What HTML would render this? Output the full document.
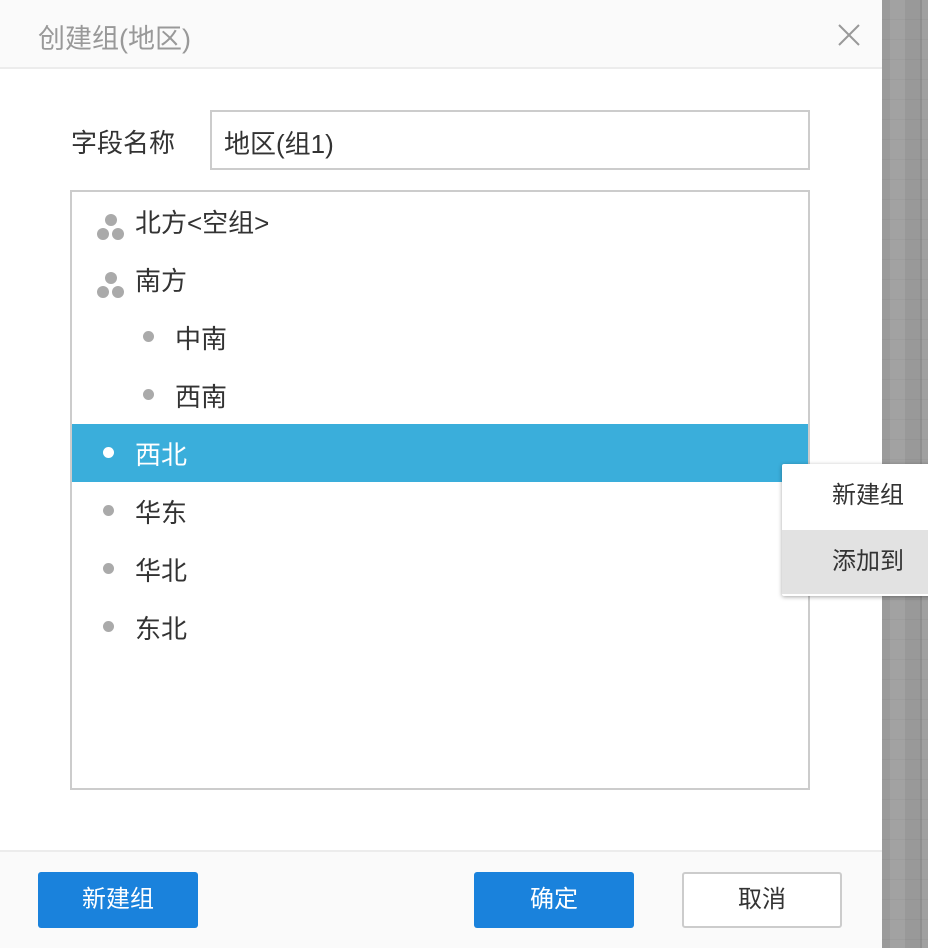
<!DOCTYPE html>
<html><head><meta charset="utf-8"><style>
*{margin:0;padding:0;box-sizing:border-box}
body{width:928px;height:948px;overflow:hidden;position:relative;font-family:"Liberation Sans","Noto Sans CJK SC",sans-serif;background:#9a9a9a}
.bg{position:absolute;left:882px;top:0;width:46px;height:948px;
background:
repeating-linear-gradient(180deg,transparent 0 19px,rgba(0,0,0,.03) 19px 20px),
linear-gradient(90deg,#9a9a9a 0 8px,#a2a2a2 8px 23px,#999 23px 38px,#8f8f8f 38px 40px,#a0a0a0 40px);}
.dlg{position:absolute;left:0;top:0;width:882px;height:948px;background:#fff}
.hd{position:absolute;left:0;top:0;width:882px;height:69px;background:#fafafa;border-bottom:2px solid #ececec}
.hd .t{position:absolute;left:38px;top:17px;font-size:27px;color:#999}
.ft{position:absolute;left:0;top:850px;width:882px;height:98px;background:#fafafa;border-top:2px solid #ececec}
.lbl{position:absolute;left:71px;top:123px;font-size:26px;color:#333}
.inp{position:absolute;left:210px;top:110px;width:600px;height:60px;border:2px solid #ccc;font-size:26px;color:#333;padding:12px 0 0 12px}
.box{position:absolute;left:70px;top:190px;width:740px;height:600px;border:2px solid #ccc}
.row{position:absolute;left:0;width:736px;height:58px;font-size:26px;color:#333}
.row span{position:absolute;top:11px}
.dot{position:absolute;width:11px;height:11px;border-radius:50%;background:#aaa;top:23px}
.sel{background:#3aaedb;color:#fff}
.sel .dot{background:#fff}
.btn{position:absolute;top:872px;width:160px;height:56px;border-radius:3px;font-size:24px;text-align:center;line-height:56px}
.pri{background:#1a82dc;color:#fff}
.def{background:#fff;border:2px solid #ccc;color:#333;line-height:52px}
.menu{position:absolute;left:782px;top:464px;width:150px;height:132px;background:#fff;box-shadow:0 1px 4px rgba(0,0,0,.35);border-radius:2px}
.mi{position:absolute;left:0;width:150px;height:64px;font-size:24px;color:#333;padding-left:50px;line-height:64px}
</style></head><body>
<div class="bg"></div>
<div class="dlg">
<div class="hd"><div class="t">创建组(地区)</div>
<svg style="position:absolute;left:838px;top:24px" width="22" height="22" viewBox="0 0 22 22"><path d="M1 1L21 21M21 1L1 21" stroke="#999" stroke-width="2"/></svg></div>
<div class="lbl">字段名称</div>
<div class="inp">地区(组1)</div>
<div class="box">
<div class="row" style="top:0"><svg style="position:absolute;left:24px;top:21px" width="30" height="28"><circle cx="15" cy="7" r="6" fill="#aaa"/><circle cx="7" cy="21" r="6" fill="#aaa"/><circle cx="22" cy="21" r="6" fill="#aaa"/></svg><span style="left:63px">北方&lt;空组&gt;</span></div>
<div class="row" style="top:58px"><svg style="position:absolute;left:24px;top:21px" width="30" height="28"><circle cx="15" cy="7" r="6" fill="#aaa"/><circle cx="7" cy="21" r="6" fill="#aaa"/><circle cx="22" cy="21" r="6" fill="#aaa"/></svg><span style="left:63px">南方</span></div>
<div class="row" style="top:116px"><i class="dot" style="left:71px"></i><span style="left:103px">中南</span></div>
<div class="row" style="top:174px"><i class="dot" style="left:71px"></i><span style="left:103px">西南</span></div>
<div class="row sel" style="top:232px"><i class="dot" style="left:31px"></i><span style="left:63px">西北</span></div>
<div class="row" style="top:290px"><i class="dot" style="left:31px"></i><span style="left:63px">华东</span></div>
<div class="row" style="top:348px"><i class="dot" style="left:31px"></i><span style="left:63px">华北</span></div>
<div class="row" style="top:406px"><i class="dot" style="left:31px"></i><span style="left:63px">东北</span></div>
</div>
<div class="ft"></div>
<div class="btn pri" style="left:38px">新建组</div>
<div class="btn pri" style="left:474px">确定</div>
<div class="btn def" style="left:682px">取消</div>
</div>
<div class="menu">
<div class="mi" style="top:0">新建组</div>
<div class="mi" style="top:66px;background:#e2e2e2">添加到</div>
</div>
</body></html>
